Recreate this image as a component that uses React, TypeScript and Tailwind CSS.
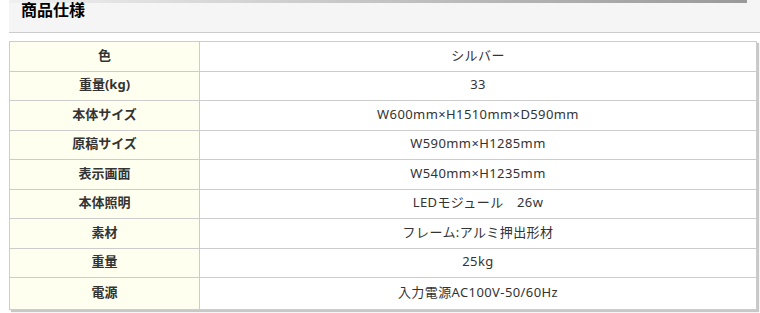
const rows: [string, string][] = [
  ["色", "シルバー"],
  ["重量(kg)", "33"],
  ["本体サイズ", "W600mm×H1510mm×D590mm"],
  ["原稿サイズ", "W590mm×H1285mm"],
  ["表示画面", "W540mm×H1235mm"],
  ["本体照明", "LEDモジュール　26w"],
  ["素材", "フレーム:アルミ押出形材"],
  ["重量", "25kg"],
  ["電源", "入力電源AC100V-50/60Hz"],
];

export default function App() {
  return (
    <div
      className="h-[313px] w-[760px] overflow-hidden bg-white text-[#333]"
      style={{ fontFamily: '"Noto Sans", "Noto Sans CJK JP", sans-serif' }}
    >
      <div className="ml-[9px] h-[33px] border-b border-[#cccccc] bg-[#f5f5f5]">
        <div className="h-[3px] w-[738px] bg-gradient-to-r from-[#f0f0f0] to-[#999999]" />
        <h2 className="-mt-[4px] pl-[12px] text-[16px] font-bold leading-[22px] text-black">
          商品仕様
        </h2>
      </div>
      <div className="ml-[9px] mt-[8px] w-[748px] border border-[#cccccc] shadow-[2px_2px_1px_#c8c8c8]">
        {rows.map(([label, value], i) => (
          <div
            key={i}
            className={
              i === rows.length - 1
                ? "flex h-[31px] text-[13px] leading-[16px]"
                : "flex h-[29.5px] border-b border-[#cccccc] text-[13px] leading-[16px]"
            }
          >
            <div className="flex w-[190px] shrink-0 items-center justify-center border-r border-[#cccccc] bg-[#fffff0] pb-[3px] font-bold">
              {label}
            </div>
            <div className="flex flex-1 items-center justify-center pb-[3px] tracking-[0.4px]">{value}</div>
          </div>
        ))}
      </div>
    </div>
  );
}
